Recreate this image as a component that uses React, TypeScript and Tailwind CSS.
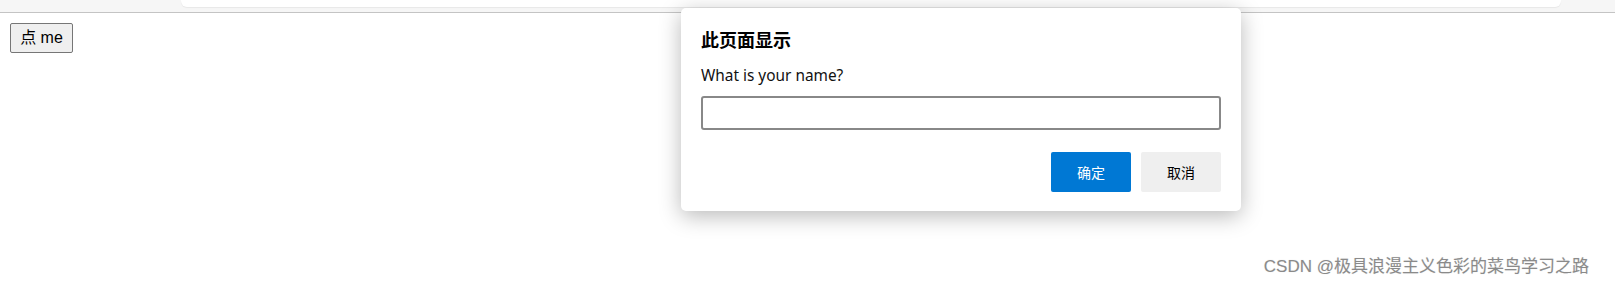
export default function App() {
  return (
    <div className="relative h-[288px] w-[1615px] overflow-hidden bg-white font-['Noto_Sans','Noto_Sans_CJK_SC',sans-serif]">
      {/* browser chrome remnant */}
      <div className="flex h-[13px] border-b border-[#c4c4c4] bg-[#f6f6f6]">
        <div className="ml-[181px] h-[7px] w-[1380px] rounded-b-[6px] bg-white shadow-[0_1px_1px_rgba(0,0,0,0.06)]" />
      </div>

      <div className="pl-[10px] pt-[10px]">
        <button className="h-[30px] w-[63px] rounded-[2px] border border-[#767676] bg-[#efefef] font-['Liberation_Sans','Noto_Sans_CJK_SC',sans-serif] text-[16px] leading-none text-black">
          点 me
        </button>
      </div>

      {/* prompt dialog */}
      <div className="absolute left-[681px] top-[8px] w-[560px] rounded-[5px] bg-white px-[20px] pb-[19px] pt-[19px] shadow-[0_5px_22px_rgba(0,0,0,0.28)]">
        <div className="font-['Noto_Sans_CJK_SC',sans-serif] text-[18px] font-bold leading-[24px] text-black">
          此页面显示
        </div>
        <div className="mt-[15px] text-[15.4px] leading-[20px] text-[#111]">What is your name?</div>
        <input className="mt-[10px] block h-[34px] w-full rounded-[3px] border-2 border-[#888] bg-white px-2 outline-none" />
        <div className="mt-[22px] flex justify-end gap-[10px]">
          <button className="h-[40px] w-[80px] rounded-[2px] bg-[#0078d4] font-['Noto_Sans_CJK_SC',sans-serif] text-[14px] text-white">
            确定
          </button>
          <button className="h-[40px] w-[80px] rounded-[2px] bg-[#efefef] font-['Noto_Sans_CJK_SC',sans-serif] text-[14px] text-black">
            取消
          </button>
        </div>
      </div>

      {/* watermark */}
      <div className="absolute bottom-[9px] right-[26px] font-['Liberation_Sans','Noto_Sans_CJK_SC',sans-serif] text-[17px] leading-[24px] text-[#8a8a8a] [text-shadow:0_0_2px_#fff,0_0_1px_#ccc]">
        CSDN @极具浪漫主义色彩的菜鸟学习之路
      </div>
    </div>
  );
}
